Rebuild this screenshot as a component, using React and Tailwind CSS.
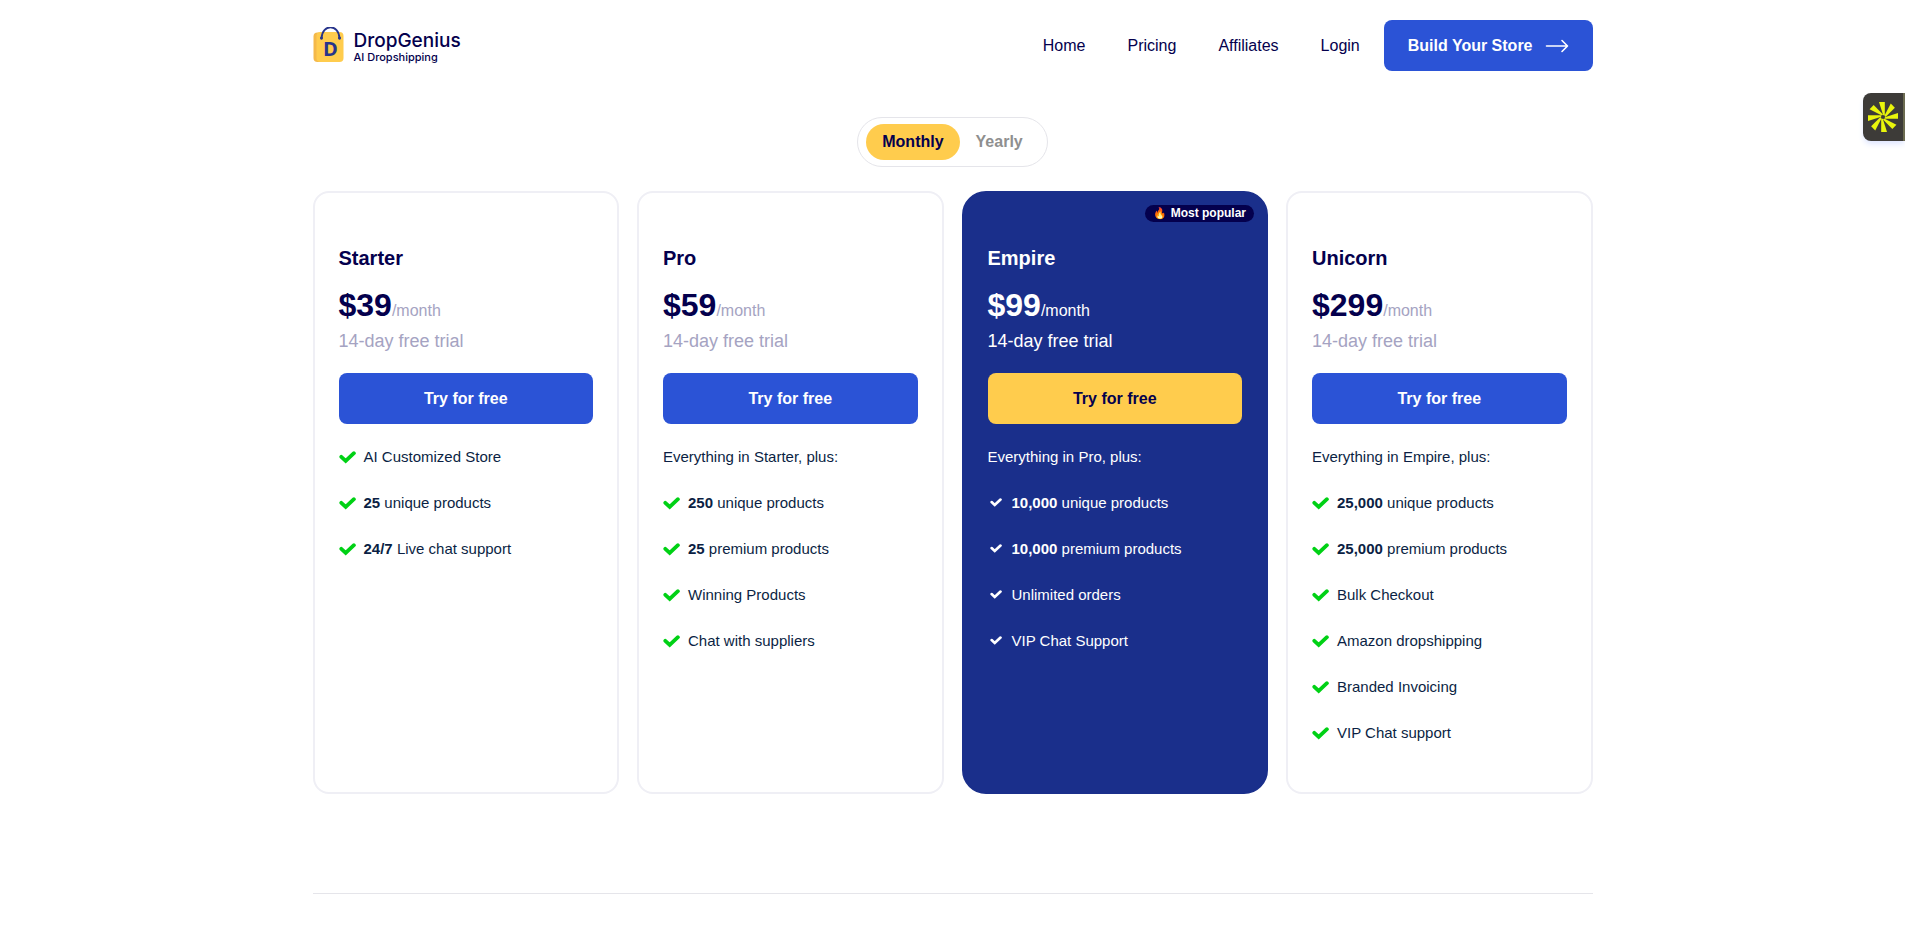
import React, { useState } from "react";

const navLinks = ["Home", "Pricing", "Affiliates", "Login"];

const plans = [
  {
    name: "Starter",
    monthly: 39,
    yearly: 29,
    features: [
      { text: "AI Customized Store" },
      { bold: "25", text: "unique products" },
      { bold: "24/7", text: "Live chat support" },
    ],
  },
  {
    name: "Pro",
    monthly: 59,
    yearly: 44,
    intro: "Everything in Starter, plus:",
    features: [
      { bold: "250", text: "unique products" },
      { bold: "25", text: "premium products" },
      { text: "Winning Products" },
      { text: "Chat with suppliers" },
    ],
  },
  {
    name: "Empire",
    monthly: 99,
    yearly: 74,
    popular: true,
    intro: "Everything in Pro, plus:",
    features: [
      { bold: "10,000", text: "unique products" },
      { bold: "10,000", text: "premium products" },
      { text: "Unlimited orders" },
      { text: "VIP Chat Support" },
    ],
  },
  {
    name: "Unicorn",
    monthly: 299,
    yearly: 224,
    intro: "Everything in Empire, plus:",
    features: [
      { bold: "25,000", text: "unique products" },
      { bold: "25,000", text: "premium products" },
      { text: "Bulk Checkout" },
      { text: "Amazon dropshipping" },
      { text: "Branded Invoicing" },
      { text: "VIP Chat support" },
    ],
  },
];

const Logo = () => (
  <a href="#" className="flex items-center gap-2.5 text-[#04004d]">
    <svg width="31" height="38" viewBox="0 0 31 38" aria-hidden="true">
      <rect x="0.5" y="5.5" width="26" height="29.5" rx="4" fill="#f4b94a" />
      <rect x="3.5" y="5" width="27" height="30" rx="4" fill="#ffcc4d" />
      <path
        d="M8.5 11.5C9 -3.5 26 -3.5 26.5 11.5"
        fill="none"
        stroke="#27348b"
        strokeWidth="1.8"
        strokeLinecap="round"
      />
      <circle cx="8.5" cy="11" r="1.5" fill="#27348b" />
      <circle cx="26.5" cy="11" r="1.5" fill="#27348b" />
      <text
        x="10"
        y="29"
        fontSize="20"
        fontWeight="700"
        fill="#27348b"
        fontFamily="Open Sans, sans-serif"
      >
        D
      </text>
    </svg>
    <span className="flex flex-col pt-0.5 font-['Inter',sans-serif] font-medium">
      <span className="text-[19px] leading-5">DropGenius</span>
      <span className="text-[11px] leading-3">AI Dropshipping</span>
    </span>
  </a>
);

const Check = ({ light }) => (
  <svg
    viewBox="0 0 17 13"
    className={light ? "mx-0.5 w-3 shrink-0" : "w-[17px] shrink-0"}
    aria-hidden="true"
  >
    <path
      d="M2.3 5.8L6.7 9.8L14.9 2.2"
      fill="none"
      stroke={light ? "#ffffff" : "#00d115"}
      strokeWidth="3.8"
      strokeLinecap="round"
    />
  </svg>
);

const PlanCard = ({ plan, yearly }) => {
  const { popular } = plan;

  return (
    <section
      className={`relative border-2 px-6 pt-[50px] pb-[47px] ${
        popular
          ? "rounded-3xl border-[#1a2f8b] bg-[#1a2f8b] text-white"
          : "rounded-2xl border-[#efeff5] text-[#04004d]"
      }`}
    >
      {popular && (
        <span className="absolute top-3 right-3 rounded-full bg-[#04004d] px-2 text-[12px] leading-[17px] font-bold">
          <span className="text-[11px]">🔥</span> Most popular
        </span>
      )}
      <h2 className="text-xl leading-[30px] font-bold">{plan.name}</h2>
      <p className="mt-2 flex h-12 items-baseline leading-[48px]">
        <span className="text-[32px] font-bold">
          ${yearly ? plan.yearly : plan.monthly}
        </span>
        <span className={popular ? "text-white" : "text-[#a5a3c2]"}>
          /month
        </span>
      </p>
      <p
        className={`text-lg leading-[25px] ${
          popular ? "text-white" : "text-[#a5a3c2]"
        }`}
      >
        14-day free trial
      </p>
      <button
        type="button"
        className={`mt-[19px] h-[51px] w-full cursor-pointer rounded-lg font-bold ${
          popular ? "bg-[#ffcc4d] text-[#04004d]" : "bg-[#2b53d6] text-white"
        }`}
      >
        Try for free
      </button>
      <ul
        className={`mt-[21px] flex flex-col gap-[22px] text-[15px] leading-6 ${
          popular ? "text-white" : "text-[#0b1f44]"
        }`}
      >
        {plan.intro && <li>{plan.intro}</li>}
        {plan.features.map((feature, i) => (
          <li key={i} className="flex items-center gap-2">
            <Check light={popular} />
            <span>
              {feature.bold && <b>{feature.bold} </b>}
              {feature.text}
            </span>
          </li>
        ))}
      </ul>
    </section>
  );
};

const App = () => {
  const [yearly, setYearly] = useState(false);

  return (
    <div className="bg-white font-['Liberation_Sans',Arial,sans-serif] text-base text-[#04004d]">
      <header className="mx-auto flex max-w-7xl items-center justify-between py-5">
        <Logo />
        <div className="flex items-center gap-6">
          <nav className="flex gap-[42px]">
            {navLinks.map((link) => (
              <a key={link} href="#">
                {link}
              </a>
            ))}
          </nav>
          <button
            type="button"
            className="flex h-[51px] cursor-pointer items-center gap-3 rounded-lg bg-[#2b53d6] px-6 font-bold text-white"
          >
            Build Your Store
            <svg
              width="24"
              height="14"
              viewBox="0 0 24 14"
              fill="none"
              stroke="currentColor"
              strokeWidth="1.6"
              strokeLinecap="round"
              strokeLinejoin="round"
              aria-hidden="true"
            >
              <path d="M1.5 7H22M17 1.5L22.5 7L17 12.5" />
            </svg>
          </button>
        </div>
      </header>

      <main className="mx-auto max-w-7xl">
        <div className="flex justify-center pt-[26px]">
          <div className="flex rounded-full border border-[#e5e5ea] px-2 py-1.5 font-bold">
            <button
              type="button"
              onClick={() => setYearly(false)}
              className={`h-9 cursor-pointer rounded-full px-4 ${
                yearly ? "text-[#8f8f8f]" : "bg-[#ffcc4d]"
              }`}
            >
              Monthly
            </button>
            <button
              type="button"
              onClick={() => setYearly(true)}
              className={`h-9 cursor-pointer rounded-full px-4 ${
                yearly ? "bg-[#ffcc4d]" : "text-[#8f8f8f]"
              }`}
            >
              Yearly
            </button>
          </div>
        </div>

        <div className="mt-6 grid grid-cols-1 gap-[18px] sm:grid-cols-2 lg:grid-cols-4">
          {plans.map((plan) => (
            <PlanCard key={plan.name} plan={plan} yearly={yearly} />
          ))}
        </div>

        <hr className="mt-[99px] border-[#e5e5ea]" />
      </main>

      <button
        type="button"
        aria-label="Open widget"
        className="fixed top-[93px] right-0 flex h-12 w-[42px] cursor-pointer items-center justify-center rounded-l-lg border-r-2 border-[#6b6b50] bg-[#3d3b38] shadow-md shadow-indigo-100"
      >
        <svg width="32" height="32" viewBox="-16 -16 32 32" fill="#e9f50c" aria-hidden="true">
          {[0, 45, 90, 135, 180, 225, 270, 315].map((angle) => (
            <path
              key={angle}
              d="M1.8 -1.8L1.8 -15L-4 -15L0.2 -1.8Z"
              transform={`rotate(${angle})`}
            />
          ))}
        </svg>
      </button>
    </div>
  );
};

export default App;
